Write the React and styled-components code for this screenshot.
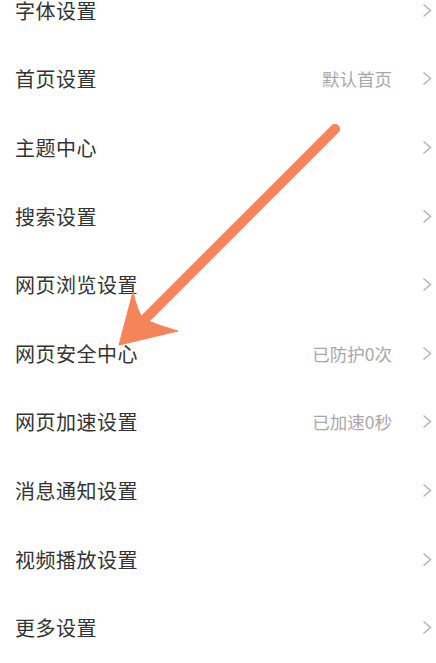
import React from 'react';
import styled, { createGlobalStyle } from 'styled-components';

const GlobalStyle = createGlobalStyle`
  html, body {
    margin: 0;
    padding: 0;
    background: #fff;
  }
  body {
    font-family: "Noto Sans CJK SC", "Noto Sans", sans-serif;
    overflow: hidden;
  }
`;

const Page = styled.div`
  position: relative;
  width: 436px;
  height: 663px;
  overflow: hidden;
  background: #fff;
`;

const List = styled.div`
  display: flex;
  flex-direction: column;
  margin-top: -24px;
`;

const Row = styled.div`
  display: flex;
  align-items: center;
  height: 68.6px;
  padding: 0 4px 0 15px;
`;

const Label = styled.span`
  flex: 1;
  font-size: 20px;
  color: #333;
  letter-spacing: 0.5px;
`;

const Value = styled.span`
  font-size: 17.5px;
  color: #a8a8a8;
  margin-right: 30px;
`;

const Chevron = styled.svg`
  width: 10px;
  height: 15px;
  flex-shrink: 0;
`;

const Overlay = styled.svg`
  position: absolute;
  left: 0;
  top: 0;
  width: 436px;
  height: 663px;
  pointer-events: none;
`;

const items = [
  { label: '字体设置' },
  { label: '首页设置', value: '默认首页' },
  { label: '主题中心' },
  { label: '搜索设置' },
  { label: '网页浏览设置' },
  { label: '网页安全中心', value: '已防护0次' },
  { label: '网页加速设置', value: '已加速0秒' },
  { label: '消息通知设置' },
  { label: '视频播放设置' },
  { label: '更多设置' },
];

function Arrow() {
  return (
    <Chevron viewBox="0 0 10 15">
      <polyline points="1.5,1.5 8.5,7.5 1.5,13.5" fill="none" stroke="#b3b3b3" strokeWidth="1.5" />
    </Chevron>
  );
}

export default function App() {
  return (
    <Page>
      <GlobalStyle />
      <List>
        {items.map((it) => (
          <Row key={it.label}>
            <Label>{it.label}</Label>
            {it.value && <Value>{it.value}</Value>}
            <Arrow />
          </Row>
        ))}
      </List>
      <Overlay viewBox="0 0 436 663">
        <line x1="335" y1="129" x2="138" y2="326" stroke="#f5845b" strokeWidth="10" strokeLinecap="round" />
        <path
          d="M119 345 L133 292 Q137 310 143 319 Q160 326 178 331 Z"
          fill="#f5845b"
          stroke="#f5845b"
          strokeWidth="1"
          strokeLinejoin="round"
        />
      </Overlay>
    </Page>
  );
}
